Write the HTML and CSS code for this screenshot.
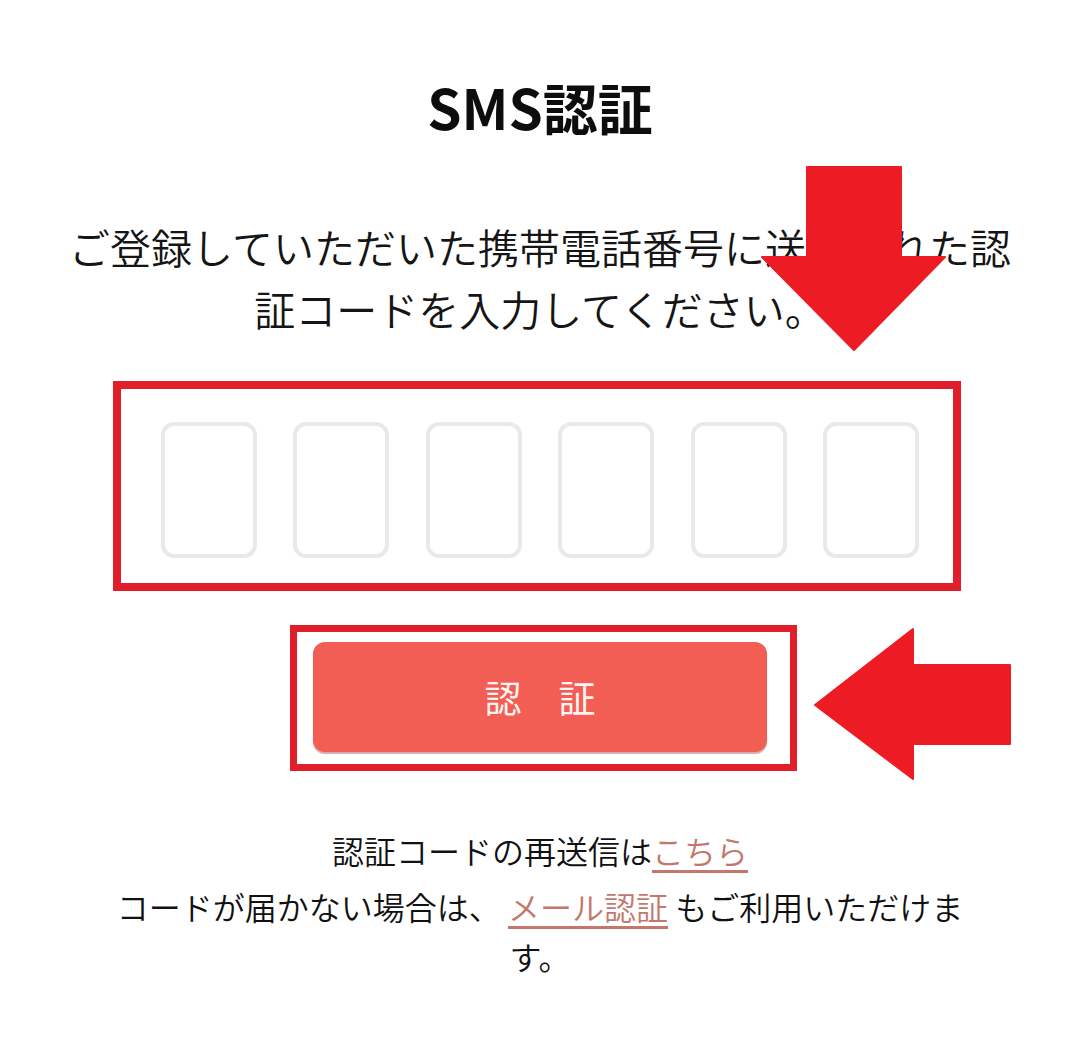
FILE: index.html
```html
<!DOCTYPE html>
<html lang="ja">
<head>
<meta charset="utf-8">
<title>SMS認証</title>
<link rel="stylesheet" href="styles.css">
</head>
<body>
<div class="page">
  <h1 class="title">SMS認証</h1>
  <p class="lead">ご登録していただいた携帯電話番号に送信された認証コードを入力してください。</p>

  <div class="code-frame">
    <div class="code-row">
      <div class="code-box"></div>
      <div class="code-box"></div>
      <div class="code-box"></div>
      <div class="code-box"></div>
      <div class="code-box"></div>
      <div class="code-box"></div>
    </div>
  </div>

  <div class="btn-frame">
    <button class="btn" type="button">認　証</button>
  </div>

  <p class="note first">認証コードの再送信は<a class="link" href="#">こちら</a></p>
  <p class="note second">コードが届かない場合は、 <a class="link" href="#">メール認証</a> もご利用いただけます。</p>

  <svg class="arrow arrow-down" width="190" height="190" viewBox="0 0 190 190" aria-hidden="true">
    <polygon points="47,2 141,2 141,92 185,92 94,185 2,92 47,92" />
  </svg>
  <svg class="arrow arrow-left" width="202" height="156" viewBox="0 0 202 156" aria-hidden="true">
    <polygon points="3,79 101,3 101,39 198,39 198,118 101,118 101,153" />
  </svg>
</div>
</body>
</html>
```

FILE: styles.css
```css
* {
  box-sizing: border-box;
}

html, body {
  margin: 0;
  padding: 0;
  background: #ffffff;
}

body {
  font-family: "Noto Sans CJK JP", "Noto Sans", sans-serif;
  color: #111111;
}

.page {
  position: relative;
  width: 1080px;
  min-height: 1055px;
  display: flex;
  flex-direction: column;
  align-items: center;
  padding-top: 67px;
}

.title {
  margin: 0;
  font-size: 55px;
  line-height: 78px;
  font-weight: 700;
  color: #0d0d0d;
}

.lead {
  margin: 70px 0 0;
  width: 960px;
  text-align: center;
  font-size: 41px;
  line-height: 62px;
  font-weight: 350;
  color: #151515;
}

.code-frame {
  align-self: flex-start;
  margin: 42px 0 0 113px;
  width: 848px;
  height: 210px;
  border: 8px solid #e01f2b;
  padding: 33px 34px 25px 40px;
}

.code-row {
  display: flex;
  justify-content: space-between;
  height: 100%;
}

.code-box {
  width: 96px;
  height: 136px;
  border: 4px solid #e9e9e9;
  border-radius: 13px;
  background: #ffffff;
}

.btn-frame {
  align-self: flex-start;
  margin: 34px 0 0 290px;
  width: 507px;
  height: 146px;
  border: 7px solid #e01f2b;
  padding: 10px 23px 12px 16px;
}

.btn {
  display: block;
  width: 100%;
  height: 110px;
  border: none;
  border-radius: 12px;
  background: #f25e54;
  box-shadow: 0 2px 1px rgba(150, 70, 70, 0.45);
  color: #fff4f2;
  font-family: "Noto Sans CJK JP", "Noto Sans", sans-serif;
  font-size: 37px;
  font-weight: 400;
  line-height: 1;
  padding: 0;
}

.note {
  margin: 0;
  text-align: center;
  font-size: 32px;
  line-height: 50px;
  font-weight: 350;
  color: #111111;
}

.note.first {
  margin-top: 54px;
}

.note.second {
  margin-top: 6px;
  max-width: 870px;
}

.link {
  color: #c4776d;
  text-decoration: underline;
  text-decoration-color: #c4776d;
  text-decoration-thickness: 3px;
  text-underline-offset: 6px;
}

.arrow {
  position: absolute;
  display: block;
}

.arrow polygon {
  fill: #ed1c24;
  stroke: #ed1c24;
  stroke-width: 2;
  stroke-linejoin: round;
}

.arrow-down {
  left: 760px;
  top: 165px;
}

.arrow-left {
  left: 812px;
  top: 626px;
}
```
